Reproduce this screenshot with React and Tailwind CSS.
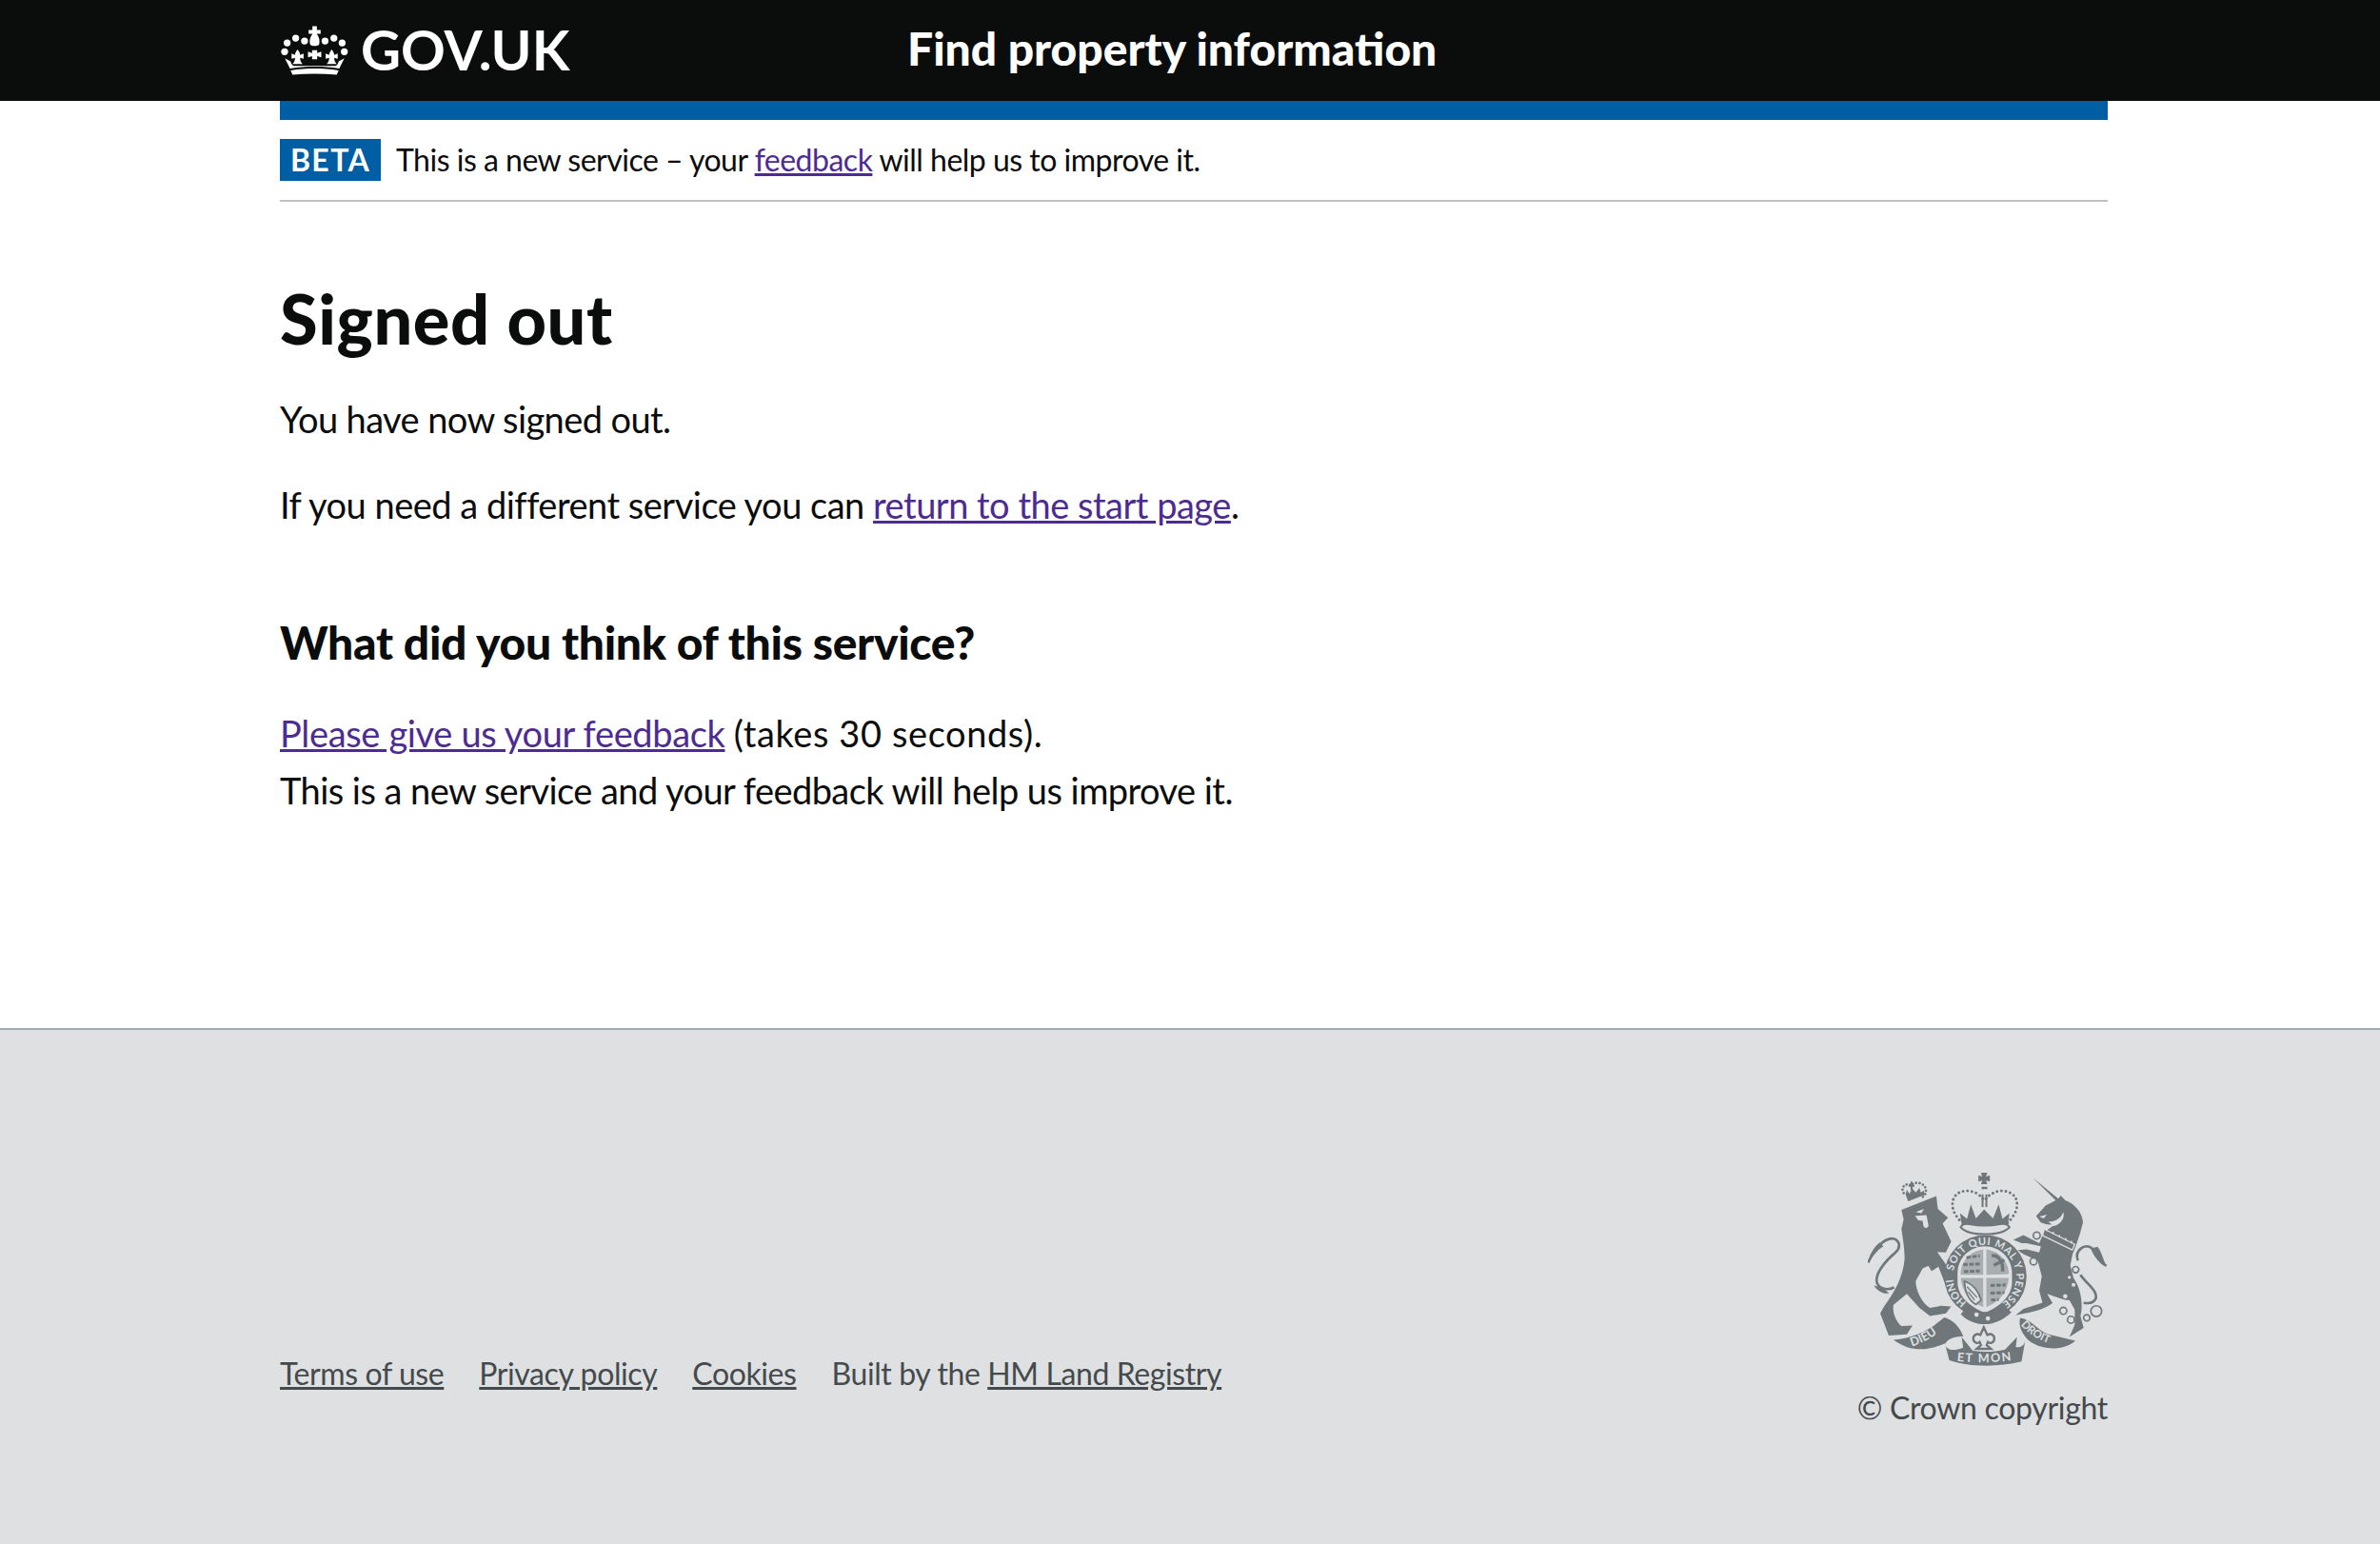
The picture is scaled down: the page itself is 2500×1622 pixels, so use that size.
const fontStack = "font-['Lato','Open_Sans',sans-serif]";

function Crown({ className }) {
  return (
    <svg viewBox="40 70 220 162" className={className} fill="#fff">
      <circle cx="63" cy="127" r="11" />
      <circle cx="90" cy="112" r="11" />
      <circle cx="118" cy="121" r="11" />
      <circle cx="183" cy="121" r="11" />
      <circle cx="211" cy="112" r="11" />
      <circle cx="237" cy="127" r="11" />
      <circle cx="55" cy="155" r="11" />
      <circle cx="244" cy="155" r="11" />
      <path d="M143 74h14v12h12v12h-12v2c8 8 10 24 7 32 -2 6 -26 6 -28 0 -3 -8 -1 -24 7 -32v-2h-12v-12h12z" />
      <path d="M142 150h16v9l13 -4v18l-13 -4v10h-16v-10l-13 4v-18l13 4z" />
      <path d="M96 148c5 6 8 12 8 17l11 -4v16l-11 -3c0 7 2 14 8 20h-32c6 -6 8 -13 8 -20l-11 3v-16l11 4c0 -5 3 -11 8 -17z" />
      <path d="M204 148c5 6 8 12 8 17l11 -4v16l-11 -3c0 7 2 14 8 20h-32c6 -6 8 -13 8 -20l-11 3v-16l11 4c0 -5 3 -11 8 -17z" />
      <path d="M56 176l18 10c2 8 4 12 10 14l132 0c6 -2 8 -6 10 -14l18 -10 -16 32c-50 -8 -106 -8 -156 0z" />
      <path d="M74 214c50 -8 102 -8 152 0l-6 14c-46 -4 -94 -4 -140 0z" />
    </svg>
  );
}

function CoatOfArms({ className }) {
  const dark = "#6f777b";
  const light = "#dee0e2";
  const motto = { fill: light, fontWeight: 700, fontFamily: "Lato, sans-serif" };
  return (
    <svg viewBox="100 62 755 622" className={className} fill={dark}>
      <defs>
        <path id="garterTop" d="M369 378A100 100 0 1 1 518 482" />
        <path id="garterLeft" d="M411 477A100 100 0 0 1 368 398" />
        <path id="ribbonLeft" d="M238 616C275 605 310 585 340 556" />
        <path id="ribbonMid" d="M380 662C430 668 500 668 555 660" />
        <path id="ribbonRight" d="M582 548C610 585 660 605 706 620" />
      </defs>

      {/* lion crown */}
      <path d="M212 132C200 112 222 98 236 108C246 94 280 98 282 122C284 134 276 142 270 146" fill="none" stroke={dark} strokeWidth="8" strokeDasharray="0 11" strokeLinecap="round" />
      <path d="M228 106h6v-10h6v10h6v6h-6v12h-6v-12h-6zM222 122l8 12 10 -16 10 12 12 -14 4 14 10 -6 2 14 -52 20 -8 -22z" />

      {/* lion */}
      <path d="M205 185L315 142L320 182L352 210L335 228L362 285L345 320L318 318L375 400L378 425L345 425L322 365L300 378L290 362L272 370L250 410C250 440 270 480 295 495L330 488L362 490L345 512L295 520L262 495L222 450L180 485C175 510 190 540 205 552L240 550L222 578L165 582L138 512L150 490C180 450 210 400 215 340C215 300 208 270 205 245L212 215Z" />
      <path d="M250 192l26 -10 -8 14zM248 204l36 -2 6 30c2 12 -14 14 -16 2l-2 -14 -14 -2z" fill={light} />
      <path d="M100 352C118 310 150 272 180 276C200 282 204 304 186 320C150 350 120 390 128 416C136 436 160 440 182 430" fill="none" stroke={dark} strokeWidth="8" />
      <path d="M100 352C104 322 122 300 136 288L148 300C130 310 116 330 100 352zM118 424C130 426 150 434 166 448C148 452 130 442 118 424z" />

      {/* royal crown */}
      <path d="M456 68h20l-4 12 12 -4v20l-12 -4 4 12h-20l4 -12 -12 4v-20l12 4z" />
      <path d="M458 112h18v8h-18zM458 136h6v40h-6zM470 136h6v40h-6z" />
      <path d="M462 150C430 110 366 120 366 168C366 192 382 212 396 226M472 150C504 110 570 120 570 168C570 192 554 212 540 226" fill="none" stroke={dark} strokeWidth="9" strokeDasharray="0 14" strokeLinecap="round" />
      <path d="M390 196L412 214L424 168L440 212L466 184L494 212L512 168L524 214L546 196L540 238H396Z" />

      {/* garter and shield */}
      <circle cx="470" cy="395" r="130" />
      <path d="M382 386C382 336 422 300 468 300C514 300 554 336 554 386V412C554 456 520 488 468 510C416 488 382 456 382 412Z" fill={light} />
      <path d="M392 388C392 350 420 316 463 310V390H392ZM473 310C516 316 544 350 544 388L473 390ZM392 400H463V492C424 478 396 446 392 400ZM473 400H544C540 446 512 478 473 492Z" fill="#a9aeb1" />
      <path d="M410 336l42 -6M400 358l54 -2M402 380l50 -2M486 424l48 -2M486 448l44 -2M488 470l24 -2" stroke={dark} strokeWidth="9" strokeDasharray="14 5" />
      <path d="M490 330C510 326 528 350 524 380M496 360L530 344" stroke={dark} strokeWidth="10" fill="none" />
      <path d="M404 410C430 420 448 440 456 470L440 484C416 470 404 440 404 410Z" fill={light} stroke={dark} strokeWidth="5" />
      <path d="M412 428L444 462M416 444L436 470" stroke={dark} strokeWidth="4" />
      <text {...motto} fontSize="33" textLength="395">
        <textPath href="#garterTop">SOIT QUI MAL Y PENSE</textPath>
      </text>
      <text {...motto} fontSize="33">
        <textPath href="#garterLeft">HONI</textPath>
      </text>
      <path d="M392 240C396 230 408 228 420 230C450 236 486 236 516 230C530 228 542 232 546 240C530 258 500 262 468 262C436 262 406 256 392 240Z" fill={light} stroke={dark} strokeWidth="6" />
      <path d="M392 514L414 490C450 514 496 514 530 488L552 508C530 530 500 546 468 546C438 546 410 534 392 514Z" />
      <circle cx="442" cy="516" r="7" fill={light} />
      <circle cx="478" cy="528" r="7" fill={light} />

      {/* unicorn */}
      <path d="M618 82L700 150L708 140L722 155C750 165 775 190 778 225L768 262L755 300L745 325L738 360L748 400C770 430 780 480 770 520L780 558L735 586L752 548L752 500L735 470C715 470 690 458 665 450L682 480C650 505 600 510 565 518L590 498L650 478L640 440L648 395L635 345L590 325L572 312L600 310L640 320L645 300L600 290L585 290L558 280L590 265L640 290L655 255L700 225C680 235 660 232 645 225L630 205L660 172L692 155Z" />
      <path d="M640 206L664 200L654 212zM668 222C690 224 708 212 716 192C722 212 706 232 686 236z" fill={light} />
      <path d="M656 246L752 294L744 312L650 266Z" stroke={light} strokeWidth="4" />
      <path d="M664 252l0 -8M684 262l0 -8M704 272l0 -8M724 282l0 -8M742 291l0 -8" stroke={light} strokeWidth="4" />
      <g fill={light}>
        <circle cx="735" cy="398" r="5" />
        <circle cx="748" cy="422" r="6" />
        <circle cx="722" cy="458" r="7" />
      </g>
      <g fill={light} stroke={dark} strokeWidth="5">
        <circle cx="632" cy="266" r="11" />
        <circle cx="622" cy="348" r="11" />
        <circle cx="755" cy="374" r="10" />
      </g>
      <g fill="none" stroke={dark} strokeWidth="5">
        <circle cx="716" cy="504" r="11" />
        <circle cx="740" cy="532" r="11" />
        <circle cx="790" cy="526" r="10" />
        <circle cx="820" cy="505" r="17" />
      </g>
      <path d="M770 390C790 420 826 440 818 466C812 478 798 482 780 478M762 345C750 312 784 290 806 306C816 330 830 350 852 362" fill="none" stroke={dark} strokeWidth="8" />
      <path d="M852 362C840 340 838 320 824 302L806 306C816 330 830 350 852 362z" />

      {/* ribbon */}
      <path d="M180 595C250 590 300 560 340 525C365 530 390 555 400 585C378 585 352 590 345 606C300 625 240 640 180 595Z" />
      <path d="M342 606C345 630 370 632 400 620L395 586L430 630C470 636 505 632 532 626L570 586L566 618C580 622 594 612 596 596L584 664C510 682 420 682 356 660Z" />
      <path d="M580 526C615 530 640 570 670 578L754 598C720 628 660 630 620 606C600 596 570 560 580 526Z" />
      <path d="M465 556L476 580C490 572 500 584 498 594C496 606 484 608 478 602L474 612L488 624H442L456 612L452 602C446 608 434 606 432 594C430 584 440 572 454 580Z" fill={light} stroke={dark} strokeWidth="7" />
      <text {...motto} fontSize="38">
        <textPath href="#ribbonLeft">DIEU</textPath>
      </text>
      <text {...motto} fontSize="38" textLength="172">
        <textPath href="#ribbonMid">ET MON</textPath>
      </text>
      <text {...motto} fontSize="34">
        <textPath href="#ribbonRight">DROIT</textPath>
      </text>
    </svg>
  );
}

export default function App() {
  return (
    <div className={`min-h-[1622px] flex flex-col bg-white text-[#0b0c0c] ${fontStack}`}>
      <header className="bg-[#0b0c0c] h-[106px] text-white">
        <div className="w-[1920px] ml-[294px] h-full flex items-center">
          <div className="w-[659px] flex items-center gap-[12px]">
            <Crown className="w-[73px] h-[54px] shrink-0" />
            <span className="text-[58px] font-bold leading-none -mt-[3px]">GOV.UK</span>
          </div>
          <span className="text-[48px] font-black leading-none -mt-[4px]">Find property information</span>
        </div>
      </header>

      <main className="w-[1920px] ml-[294px] flex-1">
        <div className="h-[20px] bg-[#005ea5]" />
        <div className="h-[86px] flex items-center border-b-2 border-[#bfc1c3]">
          <strong className="bg-[#005ea5] text-white text-[32px] font-bold tracking-[1.4px] leading-[44px] h-[44px] w-[106px] text-center">BETA</strong>
          <p className="ml-[16px] text-[32px] tracking-[-0.5px]">
            This is a new service – your <a href="#" className="text-[#4c2c92] underline">feedback</a> will help us to improve it.
          </p>
        </div>
        <h1 className="mt-[82px] text-[72px] font-black leading-[80px] tracking-[0.6px]">Signed out</h1>
        <p className="mt-[41px] text-[38px] leading-[50px] tracking-[-0.6px]">You have now signed out.</p>
        <p className="mt-[40px] text-[38px] leading-[50px] tracking-[-0.5px]">
          If you need a different service you can <a href="#" className="text-[#4c2c92] underline">return to the start page</a>.
        </p>
        <h2 className="mt-[90px] text-[48px] font-black leading-[60px] tracking-[-0.3px]">What did you think of this service?</h2>
        <p className="mt-[35px] text-[38px] leading-[60px] tracking-[-0.55px]">
          <a href="#" className="text-[#4c2c92] underline tracking-[-0.35px]">Please give us your feedback</a> <span className="tracking-[0.6px]">(takes 30 seconds).</span>
          <br />
          This is a new service and your feedback will help us improve it.
        </p>
      </main>

      <footer className="h-[542px] bg-[#dee0e2] border-t-2 border-[#a1acb2] text-[#454a4c] text-[32px]">
        <div className="w-[1920px] ml-[294px] h-full flex justify-between pt-[148px]">
          <div className="self-start mt-[189px] flex gap-[37px] tracking-[-0.4px]">
            <a href="#" className="underline">Terms of use</a>
            <a href="#" className="underline">Privacy policy</a>
            <a href="#" className="underline">Cookies</a>
            <span>Built by the <a href="#" className="underline">HM Land Registry</a></span>
          </div>
          <div className="flex flex-col items-end gap-[20px]">
            <CoatOfArms className="w-[252px] h-[207px]" />
            <span className="leading-[44px] tracking-[-0.3px]">© Crown copyright</span>
          </div>
        </div>
      </footer>
    </div>
  );
}
